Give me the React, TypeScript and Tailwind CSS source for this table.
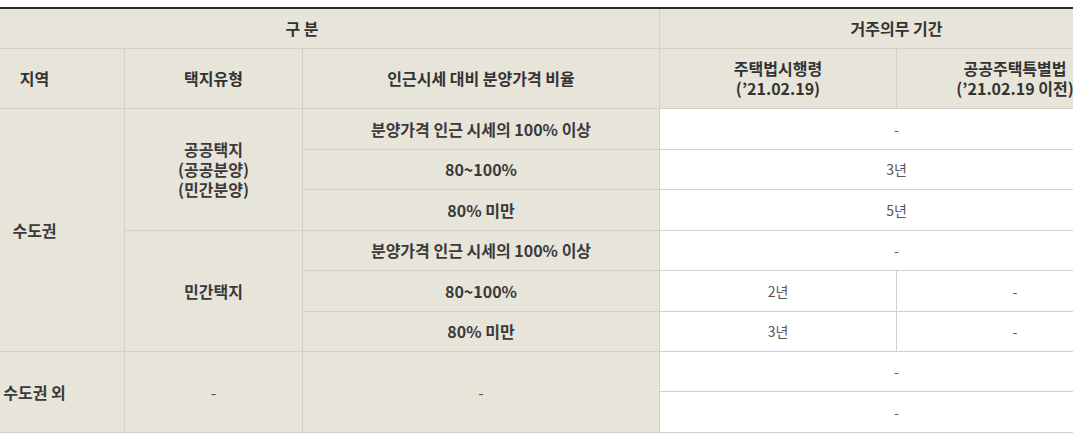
import React from "react";

const th = "border border-[#d3d0c7] bg-[#e7e4da] text-[16px] font-bold text-[#333] text-center align-middle leading-[20px]";
const tdHead = "border border-[#d3d0c7] bg-[#e7e4da] text-[16px] font-bold text-[#3a3a3a] text-center align-middle leading-[20px]";
const tdVal = "border border-[#d3d0c7] bg-white text-[14px] text-[#555] text-center align-middle leading-[20px]";

export default function App() {
  return (
    <div
      className="w-[1073px] h-[443px] overflow-hidden bg-white pt-[7px]"
      style={{ fontFamily: '"Noto Sans CJK KR", "Noto Sans", sans-serif' }}
    >
      <table className="ml-[-56px] w-[1189px] table-fixed border-collapse border-t-2 border-t-[#2a2a2a]">
        <colgroup>
          <col className="w-[180px]" />
          <col className="w-[178px]" />
          <col className="w-[357px]" />
          <col className="w-[237px]" />
          <col className="w-[237px]" />
        </colgroup>
        <thead>
          <tr className="h-[40px]">
            <th colSpan={3} className={`${th} border-t-0`}>
              구 분
            </th>
            <th colSpan={2} className={`${th} border-t-0`}>
              거주의무 기간
            </th>
          </tr>
          <tr className="h-[60px]">
            <th className={th}>지역</th>
            <th className={th}>택지유형</th>
            <th className={th}>인근시세 대비 분양가격 비율</th>
            <th className={th}>
              주택법시행령
              <br />
              (’21.02.19)
            </th>
            <th className={th}>
              공공주택특별법
              <br />
              (’21.02.19 이전)
            </th>
          </tr>
        </thead>
        <tbody>
          <tr className="h-[41px]">
            <td rowSpan={6} className={tdHead}>수도권</td>
            <td rowSpan={3} className={tdHead}>
              공공택지
              <br />
              (공공분양)
              <br />
              (민간분양)
            </td>
            <td className={tdHead}>분양가격 인근 시세의 100% 이상</td>
            <td colSpan={2} className={tdVal}>-</td>
          </tr>
          <tr className="h-[40px]">
            <td className={tdHead}>80~100%</td>
            <td colSpan={2} className={tdVal}>3년</td>
          </tr>
          <tr className="h-[41px]">
            <td className={tdHead}>80% 미만</td>
            <td colSpan={2} className={tdVal}>5년</td>
          </tr>
          <tr className="h-[40px]">
            <td rowSpan={3} className={tdHead}>민간택지</td>
            <td className={tdHead}>분양가격 인근 시세의 100% 이상</td>
            <td colSpan={2} className={tdVal}>-</td>
          </tr>
          <tr className="h-[41px]">
            <td className={tdHead}>80~100%</td>
            <td className={tdVal}>2년</td>
            <td className={tdVal}>-</td>
          </tr>
          <tr className="h-[40px]">
            <td className={tdHead}>80% 미만</td>
            <td className={tdVal}>3년</td>
            <td className={tdVal}>-</td>
          </tr>
          <tr className="h-[40px]">
            <td rowSpan={2} className={tdHead}>수도권 외</td>
            <td rowSpan={2} className={`${tdHead} font-normal text-[#555]`}>-</td>
            <td rowSpan={2} className={`${tdHead} font-normal text-[#555]`}>-</td>
            <td colSpan={2} className={tdVal}>-</td>
          </tr>
          <tr className="h-[41px]">
            <td colSpan={2} className={tdVal}>-</td>
          </tr>
        </tbody>
      </table>
    </div>
  );
}
